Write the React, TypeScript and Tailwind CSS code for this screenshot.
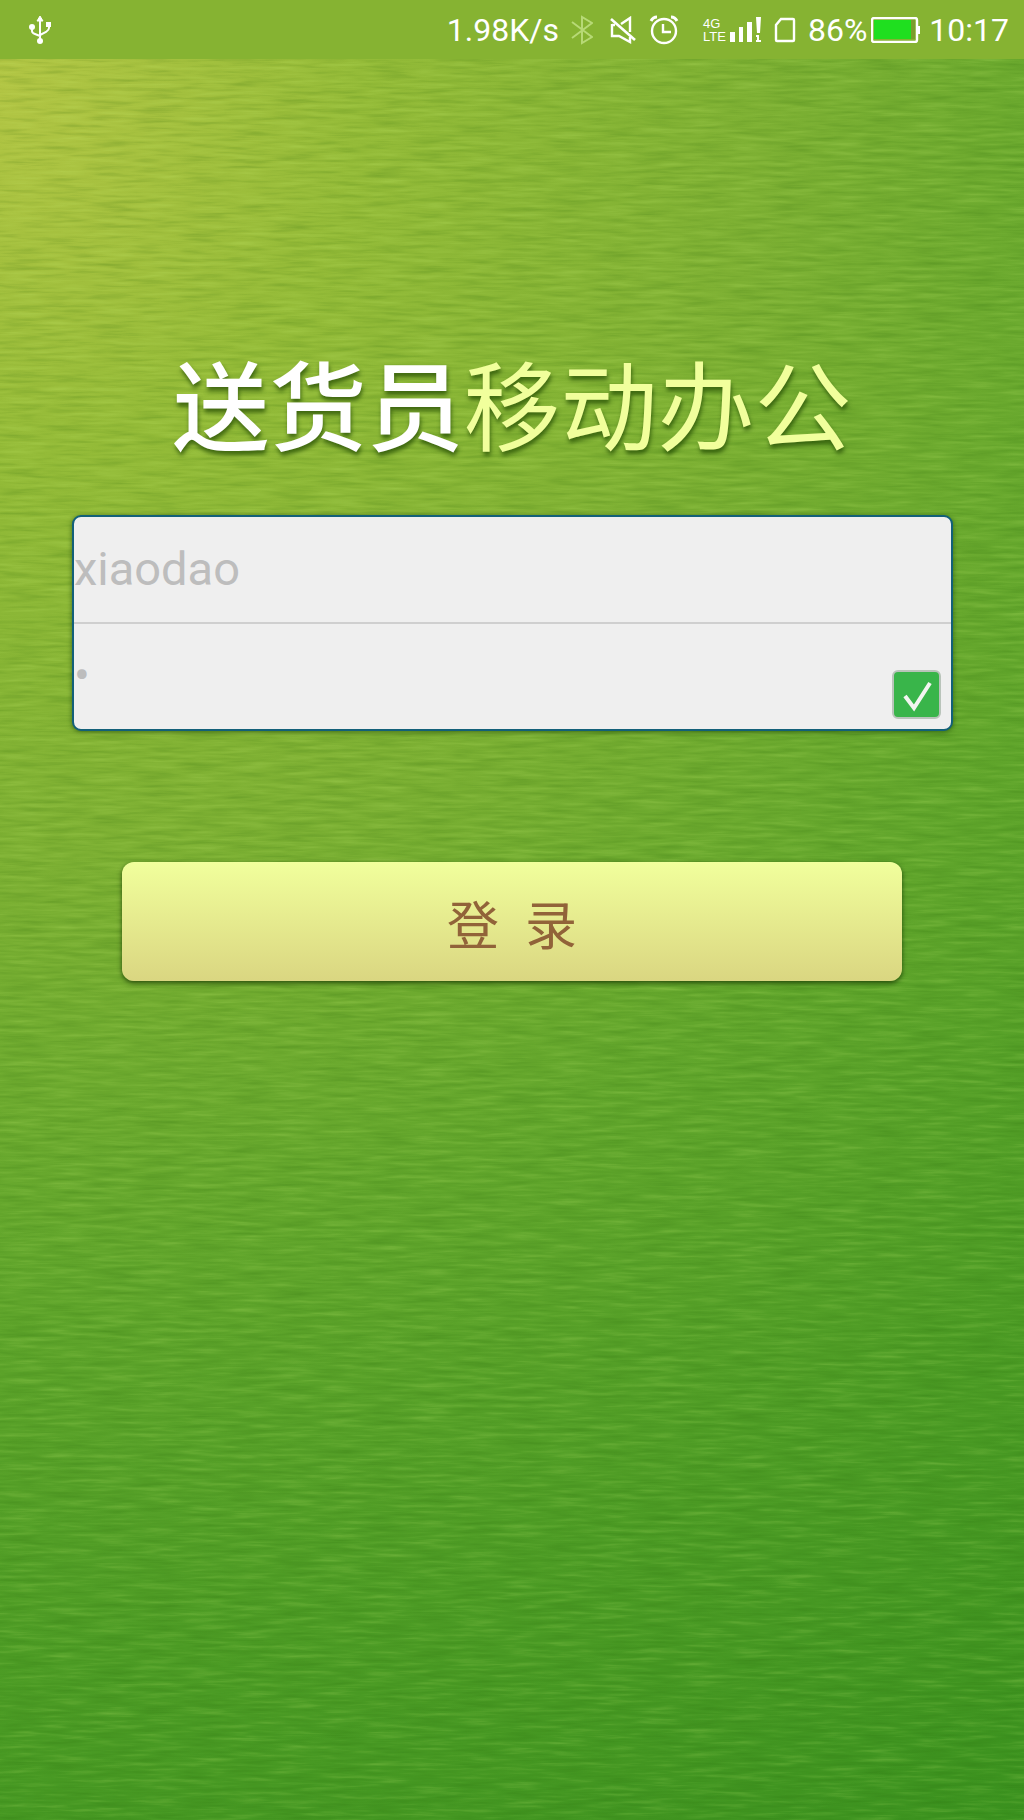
import React from "react";

function Texture() {
  return (
    <svg className="pointer-events-none absolute inset-0 h-full w-full" aria-hidden="true">
      <filter id="fabric" x="0" y="0" width="100%" height="100%" colorInterpolationFilters="sRGB">
        <feTurbulence type="fractalNoise" baseFrequency="0.022 0.24" numOctaves="3" seed="7" result="n" />
        <feColorMatrix
          in="n"
          type="matrix"
          values="0 0 0 0 0.1  0 0 0 0 0.35  0 0 0 0 0  1.5 0 0 0 -0.74"
          result="dark"
        />
        <feColorMatrix
          in="n"
          type="matrix"
          values="0 0 0 0 0.85  0 0 0 0 1  0 0 0 0 0.5  -1.5 0 0 0 0.72"
          result="light"
        />
        <feMerge>
          <feMergeNode in="dark" />
          <feMergeNode in="light" />
        </feMerge>
      </filter>
      <rect width="100%" height="100%" filter="url(#fabric)" opacity="0.28" />
    </svg>
  );
}

function UsbIcon() {
  return (
    <svg width="24" height="30" viewBox="0 0 24 30" fill="none" stroke="#fff" strokeWidth="2" aria-hidden="true">
      <path d="M12 5v20M4 12v4q0 2 3 3l5 2M21 10v3q0 2-3 4l-6 3" />
      <path d="M12 1l3 5H9z" fill="#fff" strokeWidth="1" />
      <circle cx="12" cy="26" r="3" fill="#fff" stroke="none" />
      <circle cx="4" cy="12" r="3" fill="#fff" stroke="none" />
      <path d="M18 7h5v5h-5z" fill="#fff" stroke="none" />
    </svg>
  );
}

function BluetoothIcon() {
  return (
    <svg width="22" height="30" viewBox="0 0 22 30" fill="none" stroke="#b7d976" strokeWidth="2" aria-hidden="true">
      <path d="M1 7l20 15-10 6V2l10 6L1 23" />
    </svg>
  );
}

function MuteIcon() {
  return (
    <svg width="28" height="28" viewBox="0 0 28 28" fill="none" stroke="#fff" strokeWidth="2" aria-hidden="true">
      <path d="M2 3l24 21" strokeWidth="2.6" />
      <path d="M3 8v12h7l11 6v-5M12 8l9-6v14M3 9h3" strokeWidth="2.4" />
    </svg>
  );
}

function AlarmIcon() {
  return (
    <svg width="30" height="30" viewBox="0 0 30 30" fill="none" stroke="#fff" strokeWidth="2.4" aria-hidden="true">
      <circle cx="15" cy="16" r="12" />
      <path d="M14 9v8h8" />
      <path d="M2 6q2-4 6-4M22 2q4 0 6 4" strokeWidth="3" />
    </svg>
  );
}

function SignalIcon() {
  return (
    <svg width="32" height="26" viewBox="0 0 32 26" fill="#fff" aria-hidden="true">
      <path d="M0 15h5v10H0zM9 10h4v15H9zM17 5h5v20h-5zM26 0h5l-1 16h-3z" />
      <path d="M26 18h3v5h2v2h-5v-2h1v-3h-1z" />
    </svg>
  );
}

function SimIcon() {
  return (
    <svg width="22" height="26" viewBox="0 0 22 26" fill="none" stroke="#fff" strokeWidth="2.4" aria-hidden="true">
      <path d="M7 2h12q1 0 1 1v20q0 1-1 1H3q-1 0-1-1V8z" />
    </svg>
  );
}

function BatteryIcon() {
  return (
    <svg width="50" height="26" viewBox="0 0 50 26" aria-hidden="true">
      <rect x="1" y="1" width="45" height="24" rx="2" fill="none" stroke="#fff" strokeWidth="2.4" />
      <rect x="3" y="3" width="37" height="19" fill="#1fdf1f" />
      <rect x="40" y="3" width="4" height="19" fill="#7c9c2c" />
      <path d="M47 9h2v8h-2z" fill="#fff" />
    </svg>
  );
}

function StatusBar() {
  return (
    <header className="relative flex h-[59px] items-center justify-between bg-[#86b332] pr-[15px] pl-7 text-[32px] leading-none text-white">
      <UsbIcon />
      <div className="flex items-center">
        <span>1.98K/s</span>
        <div className="ml-3 flex items-center gap-4">
          <BluetoothIcon />
          <MuteIcon />
        </div>
        <div className="ml-3">
          <AlarmIcon />
        </div>
        <div className="ml-6 flex flex-col font-['Liberation_Sans'] text-[13px] leading-[13px]">
          <span>4G</span>
          <span>LTE</span>
        </div>
        <div className="ml-1 flex items-center gap-3">
          <SignalIcon />
          <SimIcon />
        </div>
        <span className="ml-3">86%</span>
        <div className="ml-1">
          <BatteryIcon />
        </div>
        <span className="ml-2">10:17</span>
      </div>
    </header>
  );
}

function LoginForm() {
  return (
    <form className="flex flex-col" onSubmit={(e) => e.preventDefault()}>
      <div className="mr-[71px] ml-[72px] rounded-[9px] border-2 border-[#136079] bg-[#efefef] shadow-[0_1px_5px_rgba(20,60,0,0.6)]">
        <input
          type="text"
          aria-label="用户名"
          defaultValue="xiaodao"
          className="block h-[105px] w-full rounded-t-[7px] pb-0.5 text-[47px] text-[#bdbdbd] outline-none"
        />
        <div className="flex h-[107px] border-t-2 border-[#cfcfcf]">
          <input
            type="password"
            aria-label="密码"
            defaultValue="1"
            className="block h-full min-w-0 flex-1 pb-1 text-[47px] text-[#bdbdbd] outline-none"
          />
          <label className="relative mr-2.5 mb-2.5 block size-[49px] self-end">
            <input
              type="checkbox"
              aria-label="记住密码"
              defaultChecked
              className="block size-full appearance-none rounded-[6px] border-2 border-[#b9c4ba] bg-[#39b54a]"
            />
            <svg
              className="pointer-events-none absolute inset-0"
              width="49"
              height="49"
              viewBox="0 0 49 49"
              fill="none"
              stroke="#f2f5f0"
              strokeWidth="4"
              aria-hidden="true"
            >
              <path d="M13 26l9 12 16-25" />
            </svg>
          </label>
        </div>
      </div>
      <button
        type="submit"
        className="mx-[122px] mt-[131px] h-[119px] rounded-[12px] bg-linear-to-b from-[#f1ff9c] to-[#dad681] pt-3 text-[52px] font-normal whitespace-pre text-[#916339] shadow-[0_2px_5px_rgba(20,50,0,0.8)]"
      >
        登  录
      </button>
    </form>
  );
}

export default function App() {
  return (
    <div className="relative flex min-h-screen flex-col bg-[radial-gradient(circle_at_0_5%,#b2c544_0%,#94bb38_18%,#7db033_38%,#62a62c_58%,#4d9c25_78%,#3b921f_100%)] font-[Roboto,'Noto_Sans_CJK_SC',sans-serif]">
      <Texture />
      <StatusBar />
      <main className="relative flex flex-col pt-[278px]">
        <h1 className="mb-8 text-center text-[97px] leading-[146px] font-medium text-white [text-shadow:1px_4px_4px_rgba(30,70,0,0.7)]">
          送货员<span className="font-normal text-[#f1ff9c]">移动办公</span>
        </h1>
        <LoginForm />
      </main>
    </div>
  );
}
